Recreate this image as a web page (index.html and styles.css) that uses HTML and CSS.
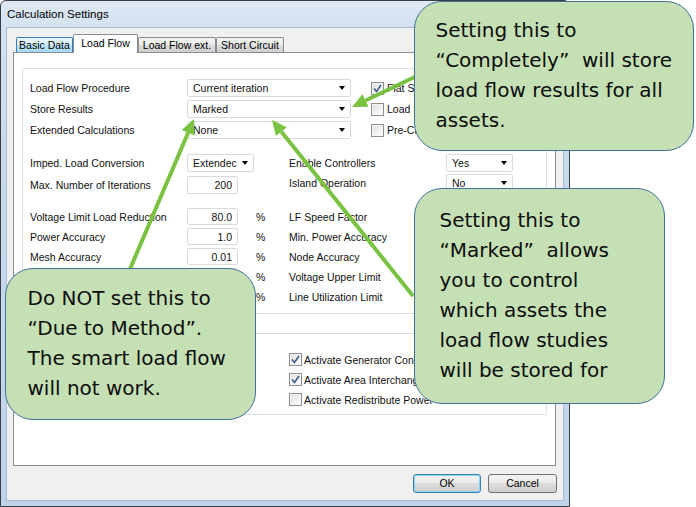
FILE: index.html
```html
<!DOCTYPE html>
<html>
<head>
<meta charset="utf-8">
<title>Calculation Settings</title>
<link rel="stylesheet" href="styles.css">
</head>
<body>
<div class="stage">
  <div class="window">
    <div class="titlebar">Calculation Settings</div>
    <div class="client">
      <div class="tabs">
        <div class="tab hover w57">Basic Data</div>
        <div class="tab active w65">Load Flow</div>
        <div class="tab w78">Load Flow ext.</div>
        <div class="tab w68">Short Circuit</div>
      </div>
      <div class="panel">
        <div class="group g1">
          <div class="sec-top">
            <div class="lbl">Load Flow Procedure</div>
            <div class="combo wide"><span>Current iteration</span></div>
            <div class="chk-row"><span class="cb checked"><svg viewBox="0 0 11 11"><path d="M2 5.5 L4.5 8.5 L9 2"/></svg></span><span>Flat Start</span></div>
            <div class="lbl">Store Results</div>
            <div class="combo wide"><span>Marked</span></div>
            <div class="chk-row"><span class="cb"></span><span>Load Flow</span></div>
            <div class="lbl">Extended Calculations</div>
            <div class="combo wide"><span>None</span></div>
            <div class="chk-row"><span class="cb"></span><span>Pre-Calc.</span></div>
          </div>
          <div class="sec-mid">
            <div class="mid-left">
              <div class="lbl">Imped. Load Conversion</div>
              <div class="combo short"><span>Extendec</span></div>
              <div class="lbl">Max. Number of Iterations</div>
              <div class="num">200</div>
            </div>
            <div class="mid-right">
              <div class="lbl">Enable Controllers</div>
              <div class="combo short"><span>Yes</span></div>
              <div class="lbl">Island Operation</div>
              <div class="combo short"><span>No</span></div>
            </div>
          </div>
          <div class="sec-num">
            <div class="lbl">Voltage Limit Load Reduction</div><div class="num">80.0</div><div class="unit">%</div>
            <div class="lbl">LF Speed Factor</div><div class="num"></div>
            <div class="lbl">Power Accuracy</div><div class="num">1.0</div><div class="unit">%</div>
            <div class="lbl">Min. Power Accuracy</div><div class="num"></div>
            <div class="lbl">Mesh Accuracy</div><div class="num">0.01</div><div class="unit">%</div>
            <div class="lbl">Node Accuracy</div><div class="num"></div>
            <div class="lbl"></div><div class="num"></div><div class="unit">%</div>
            <div class="lbl">Voltage Upper Limit</div><div class="num"></div>
            <div class="lbl"></div><div class="num"></div><div class="unit">%</div>
            <div class="lbl">Line Utilization Limit</div><div class="num"></div>
          </div>
        </div>
        <div class="group g2">
          <div class="chk-row"><span class="cb checked"><svg viewBox="0 0 11 11"><path d="M2 5.5 L4.5 8.5 L9 2"/></svg></span><span>Activate Generator Con</span></div>
          <div class="chk-row"><span class="cb checked"><svg viewBox="0 0 11 11"><path d="M2 5.5 L4.5 8.5 L9 2"/></svg></span><span>Activate Area Interchang</span></div>
          <div class="chk-row"><span class="cb"></span><span>Activate Redistribute Power</span></div>
        </div>
      </div>
      <div class="buttons">
        <div class="btn default">OK</div>
        <div class="btn cancel">Cancel</div>
      </div>
    </div>
  </div>

  <svg class="arrows" width="696" height="507" viewBox="0 0 696 507">
    <g class="arrow">
      <line x1="421" y1="74" x2="365.5" y2="100.5"/>
      <polygon points="352,107 362.5,94.2 368.6,106.8"/>
    </g>
    <g class="arrow">
      <line x1="130" y1="269" x2="188.1" y2="132.8"/>
      <polygon points="194,119 194.6,135.6 181.7,130.1"/>
    </g>
    <g class="arrow">
      <line x1="413" y1="296" x2="281.4" y2="131.7"/>
      <polygon points="272,120 286.8,127.3 275.9,136.1"/>
    </g>
  </svg>

  <div class="callout c1">Setting this to<br>“Completely”&nbsp; will store<br>load flow results for all<br>assets.</div>
  <div class="callout c2">Setting this to<br>“Marked”&nbsp; allows<br>you to control<br>which assets the<br>load flow studies<br>will be stored for</div>
  <div class="callout c3">Do NOT set this to<br>“Due to Method”.<br>The smart load flow<br>will not work.</div>
</div>
</body>
</html>
```

FILE: styles.css
```css
body {
  margin: 0;
  background: #ffffff;
  font-family: "Liberation Sans", Arial, sans-serif;
}

.stage {
  position: relative;
  width: 696px;
  height: 507px;
  overflow: hidden;
}

/* ---------- window frame ---------- */
.window {
  width: 570px;
  height: 507px;
  box-sizing: border-box;
  border: 1px solid #3a3e44;
  border-radius: 6px 6px 0 0;
  background: linear-gradient(180deg, #dfe9f5 0, #d3e1f1 28px, #c6d8ec 200px, #bfd3ea 100%);
  display: flex;
  flex-direction: column;
}

.titlebar {
  height: 27px;
  padding-left: 6px;
  font-size: 11.5px;
  line-height: 27px;
  color: #000;
}

.client {
  margin: 0 6px 6px;
  flex: 1;
  background: #f0f0f0;
  padding: 6px 7px 0 6px;
  box-shadow: 0 0 0 1px #a9bbd1;
  display: flex;
  flex-direction: column;
}

/* ---------- tabs ---------- */
.tabs {
  display: flex;
  align-items: flex-end;
  height: 18px;
  margin-left: 3px;
  position: relative;
  z-index: 1;
}

.tab {
  box-sizing: border-box;
  height: 15px;
  border: 1px solid #898c95;
  border-bottom: none;
  border-radius: 2px 2px 0 0;
  font-size: 10.5px;
  line-height: 14px;
  text-align: center;
  color: #000;
  background: linear-gradient(180deg, #f2f2f2 0, #ebebeb 50%, #dddddd 50%, #cfcfcf 100%);
  white-space: nowrap;
}

.tab.hover {
  background: linear-gradient(180deg, #eaf6fd 0, #d9f0fc 50%, #bee6fd 50%, #a7d9f5 100%);
  border-color: #3c7fb1;
}

.tab.active {
  height: 19px;
  margin-bottom: -1px;
  background: #ffffff;
  line-height: 17px;
}

.w57 { width: 57px; }
.w65 { width: 65px; }
.w78 { width: 78px; }
.w68 { width: 68px; }

/* ---------- panel ---------- */
.panel {
  width: 543px;
  height: 414px;
  box-sizing: border-box;
  border: 1px solid #898c95;
  background: #ffffff;
  padding: 15px 8px 0;
}

.group {
  box-sizing: border-box;
  width: 525px;
  border: 1px solid #d5dfe5;
  border-radius: 3px;
  font-size: 10.5px;
  color: #111;
}

.g1 {
  padding: 10px 0 8px 7px;
}

.lbl {
  display: flex;
  align-items: center;
  white-space: nowrap;
}

.sec-top {
  display: grid;
  grid-template-columns: 157px 164px 1fr;
  grid-auto-rows: 18px;
  row-gap: 3px;
}

.chk-row {
  display: flex;
  align-items: center;
  gap: 3px;
  white-space: nowrap;
}

.sec-top .chk-row {
  margin-left: 20px;
}

.cb {
  box-sizing: border-box;
  width: 13px;
  height: 13px;
  border: 1px solid #8e8f8f;
  background: linear-gradient(135deg, #dcdcdc 0, #f4f4f4 60%, #ffffff 100%);
  box-shadow: inset 0 0 0 1px #f4f4f4;
  flex: none;
  display: flex;
  align-items: center;
  justify-content: center;
}

.cb svg {
  width: 11px;
  height: 11px;
}

.cb svg path {
  fill: none;
  stroke: #3d5a8c;
  stroke-width: 1.6;
}

.combo {
  box-sizing: border-box;
  height: 18px;
  border: 1px solid #dadada;
  border-radius: 2px;
  background: #ffffff;
  display: flex;
  align-items: center;
  justify-content: space-between;
  padding: 0 5px 0 5px;
  white-space: nowrap;
  overflow: hidden;
}

.combo::after {
  content: "";
  flex: none;
  width: 0;
  height: 0;
  border-left: 3.5px solid transparent;
  border-right: 3.5px solid transparent;
  border-top: 4px solid #000;
  margin-left: 2px;
}

.combo.wide { width: 164px; }
.combo.short { width: 67px; }

.num {
  box-sizing: border-box;
  width: 51px;
  height: 18px;
  border: 1px solid #dadada;
  border-radius: 2px;
  background: #fff;
  display: flex;
  align-items: center;
  justify-content: flex-end;
  padding-right: 5px;
}

.sec-mid {
  display: flex;
  margin-top: 15px;
}

.mid-left {
  width: 259px;
  display: grid;
  grid-template-columns: 157px 67px;
  grid-auto-rows: 18px;
  row-gap: 4px;
}

.mid-right {
  display: grid;
  grid-template-columns: 157px 67px;
  grid-auto-rows: 18px;
  row-gap: 2px;
}

.sec-num {
  display: grid;
  grid-template-columns: 157px 51px 51px 157px 51px;
  grid-auto-rows: 17px;
  row-gap: 3px;
  margin-top: 14px;
}

.sec-num .num {
  height: 17px;
}

.unit {
  display: flex;
  align-items: center;
  padding-left: 18px;
}

.g2 {
  margin-top: 19px;
  padding: 18px 0 7px 266px;
  display: flex;
  flex-direction: column;
  gap: 5px;
}

.g2 .chk-row {
  height: 15px;
  gap: 2px;
}

/* ---------- buttons ---------- */
.buttons {
  display: flex;
  justify-content: flex-end;
  gap: 7px;
  margin-top: 8px;
  margin-right: -1px;
}

.btn {
  box-sizing: border-box;
  height: 19px;
  border: 1px solid #707070;
  border-radius: 3px;
  background: linear-gradient(180deg, #f2f2f2 0, #ebebeb 50%, #dddddd 50%, #cfcfcf 100%);
  font-size: 10.5px;
  line-height: 17px;
  text-align: center;
  color: #000;
}

.btn.default {
  width: 68px;
  border-color: #3c7fb1;
  box-shadow: inset 0 0 0 1px #86d5f5;
}

.btn.cancel {
  width: 69px;
}

/* ---------- annotations ---------- */
.arrows {
  position: absolute;
  left: 0;
  top: 0;
}

.arrow line {
  stroke: #7cc242;
  stroke-width: 4;
}

.arrow polygon {
  fill: #7cc242;
}

.callout {
  position: absolute;
  box-sizing: border-box;
  background: #c5e0b4;
  border: 1.5px solid #41719c;
  border-radius: 28px;
  font-family: "DejaVu Sans", Verdana, sans-serif;
  font-size: 20px;
  line-height: 30px;
  color: #0d0d0d;
  white-space: nowrap;
}

.c1 {
  left: 414px;
  top: 1px;
  width: 280px;
  height: 150px;
  padding: 12.5px 0 0 20.5px;
}

.c2 {
  left: 414px;
  top: 188px;
  width: 251px;
  height: 216px;
  padding: 15.5px 0 0 24.5px;
}

.c3 {
  left: 5px;
  top: 268px;
  width: 251px;
  height: 152px;
  padding: 13.5px 0 0 21.5px;
}
```
